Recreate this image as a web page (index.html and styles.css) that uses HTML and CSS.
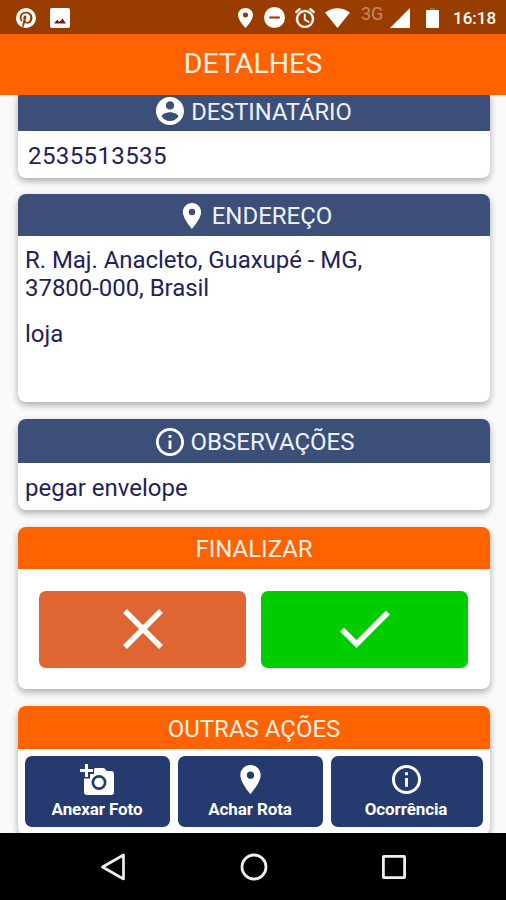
FILE: index.html
```html
<!DOCTYPE html>
<html lang="pt-BR">
<head>
  <meta charset="UTF-8">
  <meta name="viewport" content="width=device-width, initial-scale=1.0">
  <title>Detalhes</title>
  <link rel="stylesheet" href="styles.css">
</head>
<body>
  <div class="status-bar">
    <div class="status-left">
      <svg width="20" height="20" viewBox="2 2 20 20"><path fill="#fff" d="M9.04 21.54c.96.29 1.93.46 2.96.46a10 10 0 0 0 10-10A10 10 0 0 0 12 2 10 10 0 0 0 2 12c0 4.25 2.67 7.9 6.44 9.34-.09-.78-.18-2.07 0-2.96l1.15-4.94s-.29-.58-.29-1.5c0-1.38.86-2.41 1.84-2.41.86 0 1.26.63 1.26 1.44 0 .86-.57 2.09-.86 3.27-.17.98.52 1.84 1.52 1.84 1.78 0 3.16-1.9 3.16-4.58 0-2.4-1.72-4.04-4.19-4.04-2.82 0-4.48 2.1-4.48 4.31 0 .86.28 1.73.74 2.3.09.06.09.14.06.29l-.29 1.09c0 .17-.11.23-.28.11-1.28-.56-2.02-2.38-2.02-3.85 0-3.16 2.24-6.03 6.56-6.03 3.44 0 6.12 2.47 6.12 5.75 0 3.44-2.13 6.2-5.18 6.2-.97 0-1.92-.52-2.26-1.13l-.67 2.37c-.23.86-.86 2.01-1.29 2.7z"/></svg>
      <svg width="20" height="20" viewBox="0 0 20 20"><rect width="20" height="20" rx="2" fill="#fff"/><path fill="#7c1a08" d="M4 15.500l3.200-3.800 2.300 2.300 3-3.500 3.500 5z"/></svg>
    </div>
    <div class="status-right">
      <svg class="pin" width="15" height="20" viewBox="5 2 14 20" preserveAspectRatio="none"><path fill="#fff" d="M12 2C8.130 2 5 5.130 5 9c0 5.250 7 13 7 13s7-7.750 7-13c0-3.870-3.130-7-7-7zm0 9.500a2.500 2.500 0 0 1 0-5 2.500 2.500 0 0 1 0 5z"/></svg>
      <svg class="dnd" width="21" height="21" viewBox="2 2 20 20"><circle cx="12" cy="12" r="10" fill="#fff"/><rect x="7" y="11" width="10" height="2" fill="#993c00"/></svg>
      <svg class="alarm" width="20" height="20" viewBox="2 2 20 20"><path fill="#fff" stroke="#fff" stroke-width=".4" d="M22 5.720l-4.600-3.860-1.290 1.530 4.600 3.860L22 5.720zM7.880 3.390L6.600 1.860 2 5.710l1.290 1.530 4.590-3.850zM12.500 8H11v6l4.750 2.850.75-1.230-4-2.370V8zM12 4a9 9 0 1 0 .01 18A9 9 0 0 0 12 4zm0 16a7 7 0 1 1 0-14 7 7 0 0 1 0 14z"/></svg>
      <svg class="wifi" width="25" height="20" viewBox="0 0 25 20"><path fill="#fff" d="M0 4.500Q12.500-4 25 4.500L12.500 20z"/></svg>
      <span class="network">3G</span>
      <svg class="signal" width="20" height="20" viewBox="0 0 20 20"><path fill="#fff" d="M20 0v20H0z"/></svg>
      <svg class="battery" width="13" height="20" viewBox="0 0 13 20"><path fill="#ad6333" d="M4 0h5v3H4z"/><path fill="#fff" d="M1 2h11q1 0 1 1v16q0 1-1 1H1q-1 0-1-1V3q0-1 1-1z"/></svg>
      <span class="clock">16:18</span>
    </div>
  </div>

  <div class="app-bar">DETALHES</div>

  <div class="content">
    <div class="card recipient">
      <div class="card-header">
        <svg width="28" height="28" viewBox="2 2 20 20"><path fill="#fff" d="M12 2C6.480 2 2 6.480 2 12s4.480 10 10 10 10-4.480 10-10S17.520 2 12 2zm0 3c1.660 0 3 1.340 3 3s-1.340 3-3 3-3-1.340-3-3 1.340-3 3-3zm0 14.200c-2.500 0-4.710-1.280-6-3.220.03-1.990 4-3.080 6-3.080 1.990 0 5.970 1.090 6 3.080-1.290 1.940-3.500 3.220-6 3.220z"/></svg>
        <span class="recipient-title">DESTINATÁRIO</span>
      </div>
      <div class="card-body phone">2535513535</div>
    </div>

    <div class="card address">
      <div class="card-header">
        <svg width="26" height="26" viewBox="2 2 20 20"><path fill="#fff" d="M12 2C8.130 2 5 5.130 5 9c0 5.250 7 13 7 13s7-7.750 7-13c0-3.870-3.130-7-7-7zm0 9.500a2.500 2.500 0 0 1 0-5 2.500 2.500 0 0 1 0 5z"/></svg>
        <span>ENDEREÇO</span>
      </div>
      <div class="card-body">
        <p class="street">R. Maj. Anacleto, Guaxupé - MG,<br>37800-000, Brasil</p>
        <p class="place">loja</p>
      </div>
    </div>

    <div class="card notes">
      <div class="card-header">
        <svg width="28" height="28" viewBox="2 2 20 20"><path fill="#fff" d="M11 17h2v-6h-2v6zm1-15C6.480 2 2 6.480 2 12s4.480 10 10 10 10-4.480 10-10S17.520 2 12 2zm0 18c-4.410 0-8-3.590-8-8s3.590-8 8-8 8 3.590 8 8-3.590 8-8 8zM11 9h2V7h-2v2z"/></svg>
        <span>OBSERVAÇÕES</span>
      </div>
      <div class="card-body note-text">pegar envelope</div>
    </div>

    <div class="card finish">
      <div class="card-header orange"><span>FINALIZAR</span></div>
      <div class="finish-buttons">
        <button class="btn-cancel" aria-label="Cancelar">
          <svg width="40" height="40" viewBox="0 0 40 40"><path fill="none" stroke="#fff" stroke-width="5.500" d="M2 2l36 36M38 2L2 38"/></svg>
        </button>
        <button class="btn-confirm" aria-label="Confirmar">
          <svg width="50" height="40" viewBox="0 0 50 40"><path fill="none" stroke="#fff" stroke-width="5.500" d="M2 20.500l14.500 14.500L48 3.500"/></svg>
        </button>
      </div>
    </div>

    <div class="card actions">
      <div class="card-header orange"><span>OUTRAS AÇÕES</span></div>
      <div class="action-buttons">
        <button class="btn-action photo">
          <svg width="34" height="31" viewBox="0 0 34 31"><path fill="#fff" d="M5 0h3v5h5v3H8v5H5V8H0V5h5z"/><path fill="#fff" fill-rule="evenodd" d="M10 14.500V10h4V5l1-1h9l3 3h4q3 0 3 3v18q0 3-3 3H7q-3 0-3-3V14.500zM19 11a7.500 7.500 0 1 0 0 15 7.500 7.500 0 0 0 0-15zm0 2.700a4.800 4.800 0 1 1 0 9.600 4.800 4.800 0 0 1 0-9.600z"/></svg>
          <span>Anexar Foto</span>
        </button>
        <button class="btn-action route">
          <svg width="29" height="29" viewBox="2 2 20 20"><path fill="#fff" d="M12 2C8.130 2 5 5.130 5 9c0 5.250 7 13 7 13s7-7.750 7-13c0-3.870-3.130-7-7-7zm0 9.500a2.500 2.500 0 0 1 0-5 2.500 2.500 0 0 1 0 5z"/></svg>
          <span>Achar Rota</span>
        </button>
        <button class="btn-action issue">
          <svg width="29" height="29" viewBox="2 2 20 20"><path fill="#fff" d="M11 17h2v-6h-2v6zm1-15C6.480 2 2 6.480 2 12s4.480 10 10 10 10-4.480 10-10S17.520 2 12 2zm0 18c-4.410 0-8-3.590-8-8s3.590-8 8-8 8 3.590 8 8-3.590 8-8 8zM11 9h2V7h-2v2z"/></svg>
          <span>Ocorrência</span>
        </button>
      </div>
    </div>
  </div>

  <div class="nav-bar">
    <svg width="26" height="28" viewBox="0 0 26 28"><path fill="none" stroke="#eee" stroke-width="2.700" stroke-linejoin="round" d="M23.500 2v24L2.500 14z"/></svg>
    <svg width="28" height="28" viewBox="0 0 28 28"><circle cx="14" cy="14" r="12" fill="none" stroke="#eee" stroke-width="2.800"/></svg>
    <svg width="26" height="26" viewBox="0 0 26 26"><rect x="2.400" y="2.400" width="21.200" height="21.200" rx=".5" fill="none" stroke="#eee" stroke-width="2.800"/></svg>
  </div>
</body>
</html>
```

FILE: styles.css
```css
* {
  box-sizing: border-box;
}

body {
  margin: 0;
  width: 506px;
  height: 900px;
  display: flex;
  flex-direction: column;
  overflow: hidden;
  font-family: Roboto, "Liberation Sans", sans-serif;
  background-color: #fafafa;
  color: #1f2258;
}

svg {
  display: block;
  flex-shrink: 0;
}

p {
  margin: 0;
}

.status-bar {
  height: 34px;
  flex-shrink: 0;
  display: flex;
  justify-content: space-between;
  padding: 1px 10px 0 16px;
  background-color: #993c00;
  color: white;
}

.status-left,
.status-right {
  display: flex;
  align-items: center;
}

.status-left {
  gap: 14px;
}

.dnd {
  margin-left: 11px;
}

.alarm {
  margin-left: 10px;
}

.wifi {
  margin-left: 10px;
}

.network {
  width: 22px;
  margin: 0 7px 8px 11px;
  font-size: 18px;
  line-height: 20px;
  color: #c28a66;
}

.battery {
  margin-left: 16px;
}

.clock {
  width: 43px;
  margin-left: 14px;
  font-size: 17px;
  font-weight: 500;
}

.app-bar {
  height: 61px;
  flex-shrink: 0;
  background-color: #ff6200;
  color: #fff0e6;
  font-size: 28.5px;
  line-height: 59px;
  text-align: center;
}

.content {
  height: 738px;
  flex-shrink: 0;
  overflow: hidden;
  padding: 0 16px 0 18px;
}

.card {
  display: flex;
  flex-direction: column;
  margin-bottom: 17px;
  border-radius: 8px;
  background-color: white;
  box-shadow: 0 3px 7px rgba(0, 0, 0, 0.32);
  overflow: hidden;
}

.card-header {
  height: 42px;
  flex-shrink: 0;
  display: flex;
  align-items: center;
  justify-content: center;
  gap: 7px;
  padding-top: 3px;
  background-color: #3c4f79;
  color: #f0f2fa;
  font-size: 24px;
  line-height: 28px;
}

.card-header.orange {
  background-color: #ff6200;
  color: #fff0e6;
}

.card-body {
  padding: 0 7px;
  font-size: 24px;
  line-height: 28px;
}

/* scrolled partly under the app bar */
.recipient {
  height: 89px;
  margin-top: -6.5px;
}

.recipient .card-header {
  padding-top: 2px;
}

.recipient-title {
  font-size: 23.7px;
  padding-top: 2px;
}

.phone {
  padding: 11px 10px;
  letter-spacing: 0.4px;
}

.address {
  height: 208px;
  margin-top: -1px;
}

.address .card-header {
  padding-left: 3px;
}

.street {
  padding-top: 10px;
  letter-spacing: -0.05px;
}

.place {
  padding-top: 18px;
}

.notes {
  height: 91px;
}

.notes .card-header {
  height: 44px;
  padding-left: 2px;
}

.note-text {
  padding-top: 11px;
}

.finish {
  height: 162px;
}

.finish-buttons {
  display: flex;
  gap: 15px;
  padding: 22px 22px 22px 21px;
}

button {
  display: flex;
  align-items: center;
  justify-content: center;
  padding: 0;
  border: none;
  border-radius: 7px;
  color: white;
  font-family: inherit;
  cursor: pointer;
}

.btn-cancel,
.btn-confirm {
  flex: 1;
  height: 77px;
}

.btn-cancel {
  background-color: #df6532;
}

.btn-confirm {
  background-color: #00cd00;
}

.actions {
  height: 129px;
}

.actions .card-header {
  height: 43px;
}

.action-buttons {
  display: flex;
  gap: 8px;
  padding: 7px;
}

.btn-action {
  width: 145px;
  height: 71px;
  flex-direction: column;
  justify-content: space-between;
  padding: 9px 1px 8px 0;
  background-color: #253a6e;
  font-size: 17px;
  font-weight: 700;
  letter-spacing: -0.1px;
}

.btn-action span {
  line-height: 20px;
}

.btn-action.photo {
  padding-top: 8px;
}

.btn-action.issue {
  width: 152px;
  padding-right: 2px;
}

.nav-bar {
  height: 67px;
  flex-shrink: 0;
  display: flex;
  align-items: center;
  justify-content: space-between;
  padding: 0 99px 0 100px;
  background-color: black;
}
```
